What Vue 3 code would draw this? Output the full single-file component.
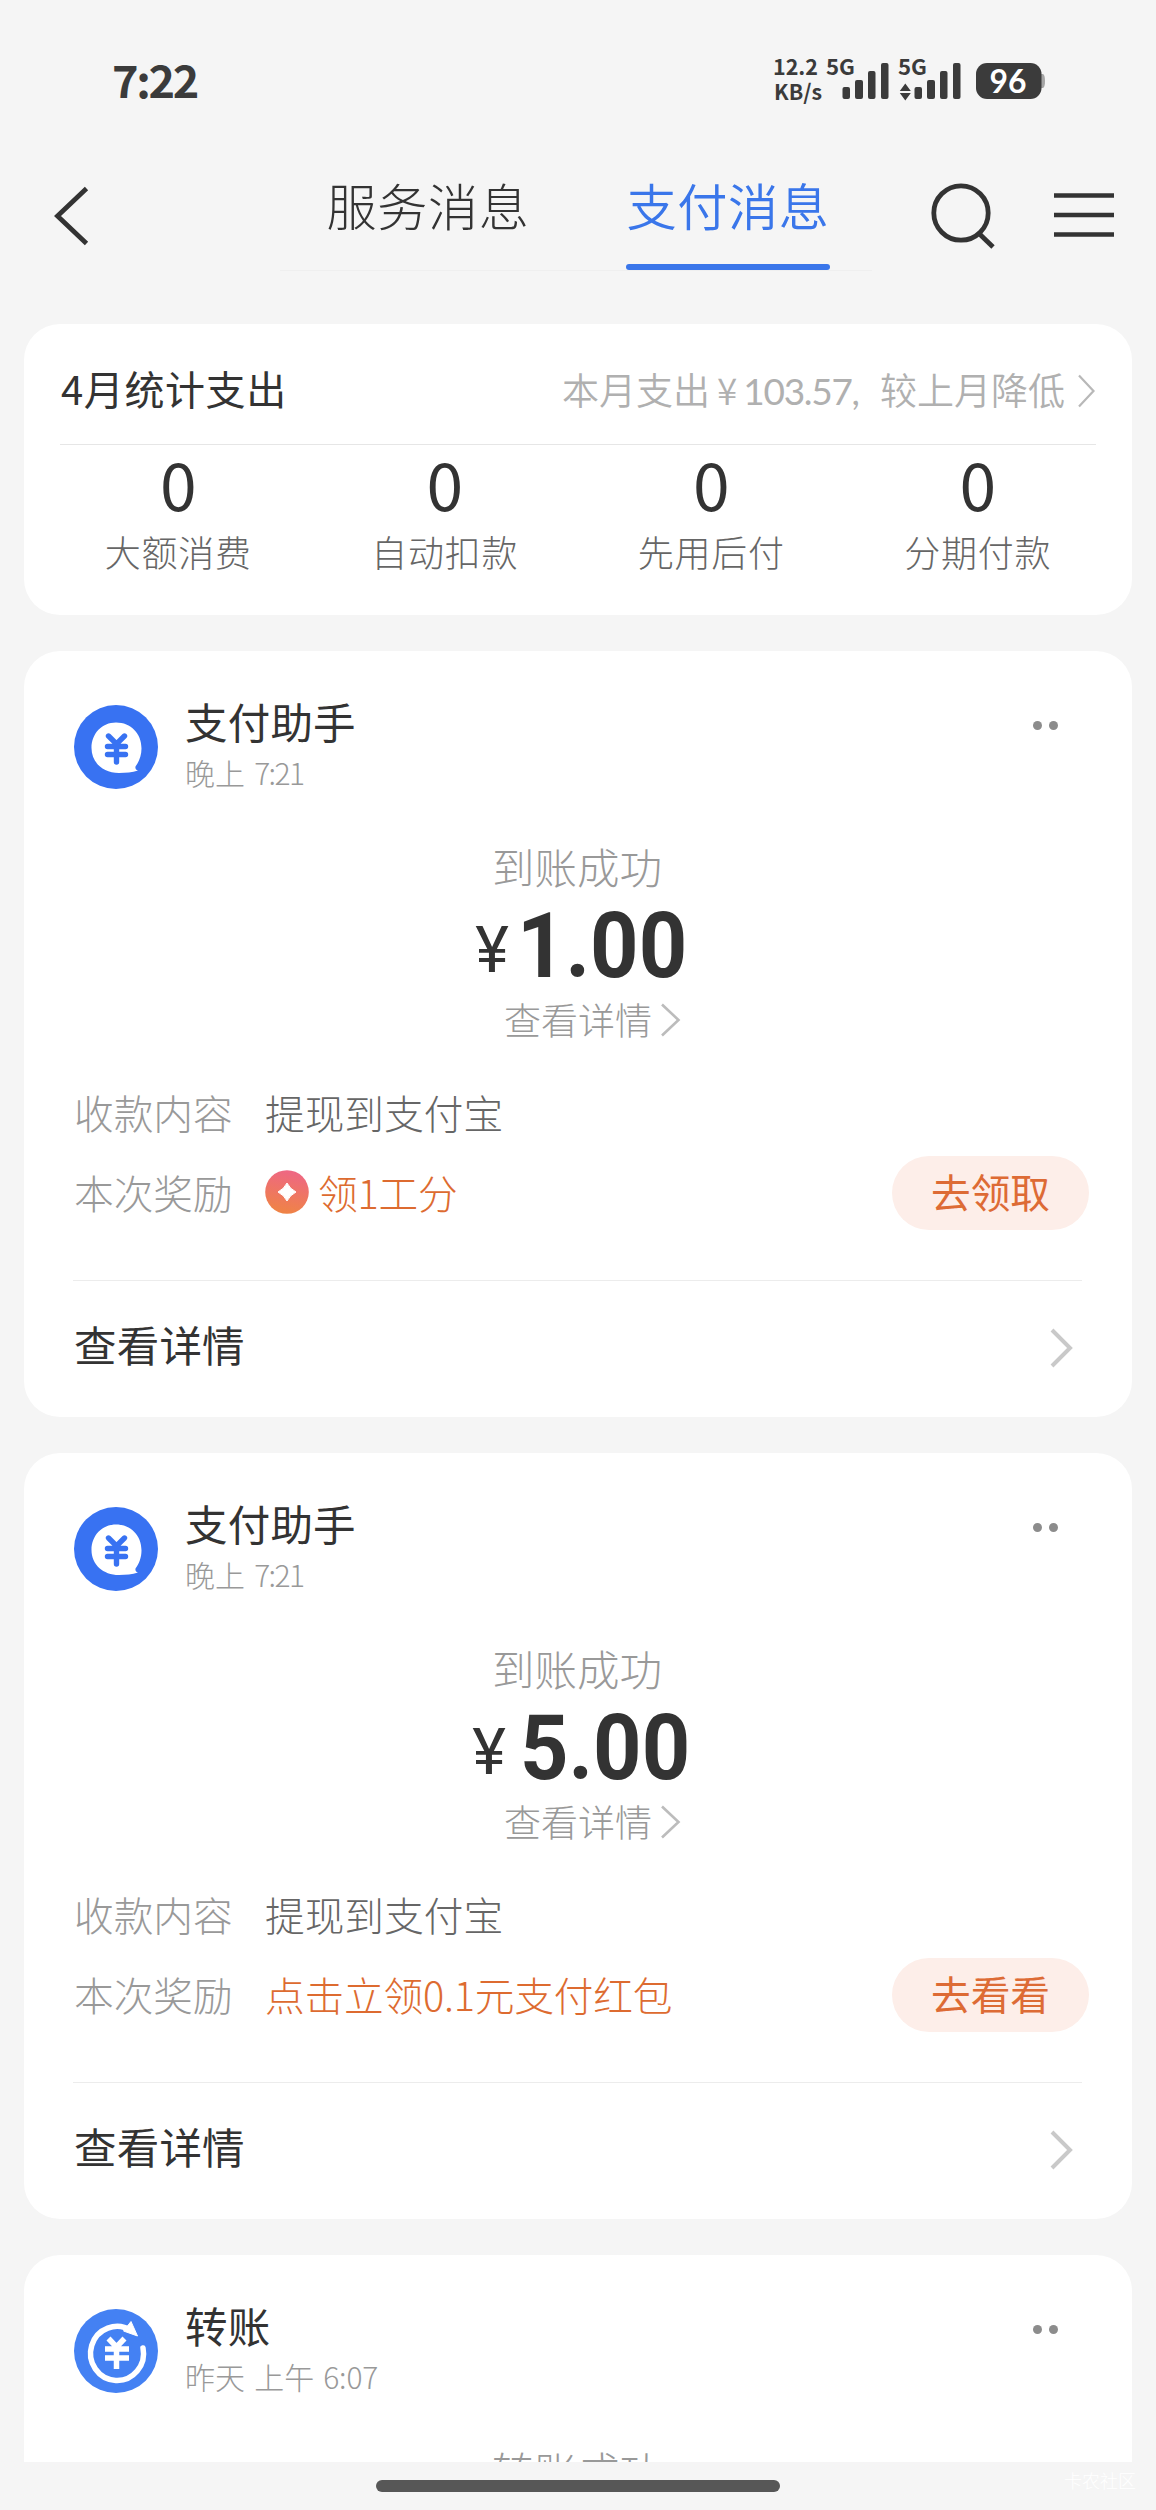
<script setup>
const stats = ['大额消费', '自动扣款', '先用后付', '分期付款']

const messages = [
  { amount: '1.00', narrow: true, reward: '领1工分', coin: true, action: '去领取' },
  { amount: '5.00', narrow: false, reward: '点击立领0.1元支付红包', coin: false, action: '去看看' },
]
</script>

<template>
  <div class="screen">
    <header class="status">
      <span class="clock">7:22</span>
      <svg class="indicators" width="290" height="65" viewBox="760 45 290 65">
        <g class="tiny">
          <text x="773" y="75" textLength="45" lengthAdjust="spacingAndGlyphs">12.2</text>
          <text x="774" y="100" textLength="48" lengthAdjust="spacingAndGlyphs">KB/s</text>
          <text x="826" y="75" textLength="29" lengthAdjust="spacingAndGlyphs">5G</text>
          <text x="898" y="75" textLength="29" lengthAdjust="spacingAndGlyphs">5G</text>
        </g>
        <g fill="#3b3b3b">
          <rect x="842.5" y="87" width="7.5" height="12" rx="2" />
          <rect x="855" y="80" width="8" height="19" rx="2" />
          <rect x="868" y="71" width="7.5" height="28" rx="2" />
          <rect x="881" y="63" width="7.5" height="36" rx="2" />
          <rect x="914.5" y="87" width="7.5" height="12" rx="2" />
          <rect x="927" y="80" width="8" height="19" rx="2" />
          <rect x="940" y="71" width="7.5" height="28" rx="2" />
          <rect x="953" y="63" width="7.5" height="36" rx="2" />
          <path d="M905.300 83.500l5.500 7.500h-11zM905.300 100.500l5.500-7.500h-11z" />
          <path d="M1040 74h3q2 1 2 7t-2 7h-3z" fill="#a5a5a5" />
          <rect x="976" y="63" width="65.500" height="36" rx="11" />
        </g>
        <text class="level" x="989.5" y="92.500" textLength="37" lengthAdjust="spacingAndGlyphs">96</text>
      </svg>
    </header>

    <nav class="nav">
      <svg class="back" width="40" height="60" viewBox="0 0 40 60"><path d="M36.500 2.500L7.500 30l29 27.500" fill="none" stroke="#333" stroke-width="4.800" /></svg>
      <div class="tabs">
        <span class="tab">服务消息</span>
        <span class="tab active">支付消息</span>
      </div>
      <svg class="search" width="68" height="70" viewBox="0 0 68 70"><ellipse cx="33" cy="34" rx="27.200" ry="27.200" fill="none" stroke="#333" stroke-width="4.800" /><path d="M50.500 54l14.500 14" stroke="#333" stroke-width="4.800" /></svg>
      <svg class="menu" width="60" height="46" viewBox="0 0 60 46"><path d="M0 2.500h60M0 22h60M0 41.500h60" stroke="#333" stroke-width="4.600" /></svg>
    </nav>

    <main class="feed">
      <section class="card summary">
        <div class="summary-head">
          <span class="summary-title">4月统计支出</span>
          <span class="summary-note"><span>本月支出</span><span class="money">¥<span>103.57,</span></span><span>较上月降低</span></span>
          <svg width="18" height="34" viewBox="0 0 18 34"><path d="M1 1.500L15.500 17 1 32.500" fill="none" stroke="#b8b8b8" stroke-width="2.200" /></svg>
        </div>
        <div class="stats">
          <div v-for="s in stats" :key="s" class="stat"><b>0</b><span>{{ s }}</span></div>
        </div>
      </section>

      <section v-for="m in messages" :key="m.amount" class="card">
        <div class="head">
          <svg class="avatar" width="84" height="84" viewBox="0 0 84 84">
            <circle cx="42" cy="42" r="42" fill="#3872f2" />
            <path d="M42 17.500C28 17.500 17.500 28.500 17.500 43S29 68 45 68c7 0 13-.7 19-2.500-2-.6-3-2-2.500-4C65 57 67.500 50.500 67.500 43.500 67.500 28.500 57 17.500 42 17.500z" fill="#fff" />
            <path d="M34.500 31l8 8 8-8M33.500 41.500h18M33.500 49.500h18M42.500 40v17" fill="none" stroke="#3872f2" stroke-width="5.400" stroke-linecap="round" />
          </svg>
          <div class="who"><span class="name">支付助手</span><span class="time">晚上 <span class="hour tight">7:21</span></span></div>
          <span class="more"><i></i><i></i></span>
        </div>
        <div class="result">到账成功</div>
        <div class="amount"><span class="yen" :class="{ close: m.narrow }">¥</span><span class="digits">{{ m.amount }}</span></div>
        <div class="detail">
          <span>查看详情</span>
          <svg width="20" height="34" viewBox="0 0 20 34"><path d="M1 1.500L17.500 17 1 32.500" fill="none" stroke="#bcbcbc" stroke-width="2.600" /></svg>
        </div>
        <div class="row"><span class="label">收款内容</span><span class="value">提现到支付宝</span></div>
        <div class="row">
          <span class="label">本次奖励</span>
          <svg v-if="m.coin" class="coin" width="44" height="44" viewBox="0 0 44 44">
            <defs><linearGradient id="coin" x1=".6" y1="0" x2=".4" y2="1"><stop offset="0" stop-color="#ee6685" /><stop offset="1" stop-color="#ef8444" /></linearGradient></defs>
            <circle cx="22" cy="22" r="21.800" fill="url(#coin)" />
            <path d="M22 13q3 6 9 9-6 3-9 9-3-6-9-9 6-3 9-9z" fill="#fff" stroke="#fff" stroke-linejoin="round" />
          </svg>
          <span class="reward">{{ m.reward }}</span>
          <span class="action">{{ m.action }}</span>
        </div>
        <div class="foot">
          <span>查看详情</span>
          <svg width="24" height="40" viewBox="0 0 24 40"><path d="M2 2L20 20 2 38" fill="none" stroke="#c9c9c9" stroke-width="4" /></svg>
        </div>
      </section>

      <section class="card last">
        <div class="head">
          <svg class="avatar" width="84" height="84" viewBox="0 0 84 84">
            <circle cx="42" cy="42" r="42" fill="#4481f3" />
            <path d="M57 21.500A26.500 27 0 1 0 69 39" fill="none" stroke="#fff" stroke-width="5.500" stroke-linecap="round" />
            <path d="M57 12.500l6.500 14.500-14-5z" fill="#fff" stroke="#fff" stroke-linejoin="round" />
            <path d="M34.500 29.500l8 8.500 8-8.500M31 40h24M31 49h24M42.500 38v22" fill="none" stroke="#fff" stroke-width="5.500" />
          </svg>
          <div class="who"><span class="name">转账</span><span class="time">昨天 上午 <span class="hour">6:07</span></span></div>
          <span class="more"><i></i><i></i></span>
        </div>
        <div class="result">转账成功</div>
      </section>
    </main>

    <footer class="bottom">
      <span class="handle"></span>
      <span class="mark">卡农社区</span>
    </footer>
  </div>
</template>

<style>
body {
  margin: 0;
  background: #f5f5f5;
}
</style>

<style scoped>
.screen {
  width: 1156px;
  height: 2510px;
  overflow: hidden;
  display: flex;
  flex-direction: column;
  background: #f5f5f5;
  color: #333;
  font-family: "Noto Sans CJK SC", sans-serif;
  font-weight: 300;
  white-space: nowrap;
}
svg {
  display: block;
  flex: none;
}
.status {
  height: 140px;
  box-sizing: border-box;
  padding: 45px 106px 0 112px;
  display: flex;
  justify-content: space-between;
}
.clock {
  font-size: 45px;
  line-height: 50px;
  margin-top: 9px;
  font-weight: 700;
  letter-spacing: -2.300px;
  color: #3b3b3b;
}
.tiny {
  font-size: 21.500px;
  font-weight: 700;
  fill: #3b3b3b;
}
.level {
  font: 700 32px Lato, sans-serif;
  fill: #fff;
}
.nav {
  height: 184px;
  flex: none;
  display: flex;
  align-items: flex-start;
}
.back {
  margin: 46px 0 0 50px;
}
.tabs {
  width: 592px;
  height: 131px;
  margin-left: 190px;
  box-sizing: border-box;
  border-bottom: 1px solid #efefef;
  display: flex;
  gap: 96px;
  padding-left: 46px;
}
.tab {
  height: 130px;
  width: 204px;
  box-sizing: border-box;
  padding-top: 29px;
  text-align: center;
  font-size: 50.200px;
  line-height: 70px;
  letter-spacing: .5px;
}
.active {
  color: #3a76ea;
  font-weight: 350;
  position: relative;
}
.active::after {
  content: "";
  position: absolute;
  left: 0;
  bottom: 0;
  width: 204px;
  height: 6px;
  border-radius: 3px;
  background: #3a76ea;
}
.search {
  margin: 39px 0 0 56px;
}
.menu {
  margin: 53px 0 0 58px;
}
.feed {
  height: 2138px;
  flex: none;
  overflow: hidden;
  padding: 0 24px;
  display: flex;
  flex-direction: column;
  gap: 36px;
}
.card {
  height: 766px;
  flex: none;
  box-sizing: border-box;
  padding: 0 50px;
  border-radius: 36px;
  background: #fff;
}
.summary {
  height: 291px;
  padding: 0 36px;
}
.summary-head {
  height: 121px;
  box-sizing: border-box;
  border-bottom: 1px solid #e6e6e6;
  display: flex;
  align-items: center;
  padding-top: 9px;
}
.summary-title {
  flex: 1;
  padding-left: 1px;
  margin-top: -2px;
  font-size: 40px;
  letter-spacing: .6px;
  font-weight: 400;
}
.summary-note {
  display: flex;
  align-items: baseline;
  font-size: 37px;
  font-weight: 350;
  color: #b0b0b0;
  margin-right: 13px;
}
.money {
  width: 170px;
  box-sizing: border-box;
  padding-left: 7px;
}
.money span {
  font-family: Lato, sans-serif;
  font-weight: 400;
  margin-left: 6px;
  letter-spacing: -1.300px;
}
.summary-head svg {
  margin-top: 5px;
}
.stats {
  display: flex;
  margin: 0 -15px;
}
.stat {
  flex: 1;
  display: flex;
  flex-direction: column;
  align-items: center;
}
.stat b {
  font-size: 66px;
  font-weight: 400;
  line-height: 74px;
}
.stat span {
  font-size: 36px;
  letter-spacing: .7px;
  line-height: 50px;
  margin-top: 7px;
  color: #666;
}
.head {
  display: flex;
  padding-top: 54px;
  height: 158px;
  box-sizing: border-box;
}
.who {
  flex: 1;
  margin-left: 27px;
  display: flex;
  flex-direction: column;
}
.name {
  font-size: 42.500px;
  font-weight: 400;
  line-height: 50px;
  margin-top: -9px;
  letter-spacing: .2px;
}
.time {
  font-size: 30px;
  line-height: 40px;
  margin-top: 6px;
  word-spacing: 2.500px;
  color: #999;
}
.hour {
  letter-spacing: -.2px;
}
.tight {
  letter-spacing: -1.600px;
}
.more {
  display: flex;
  gap: 7px;
  margin: 16px 24px 0 0;
}
.more i {
  width: 9px;
  height: 9px;
  border-radius: 50%;
  background: #8c8c8c;
}
.result {
  margin-top: 27px;
  padding-right: 2px;
  text-align: center;
  font-size: 42.500px;
  line-height: 60px;
  color: #999;
}
.amount {
  height: 99px;
  padding-left: 6px;
  display: flex;
  align-items: baseline;
  justify-content: center;
  font-family: Roboto, sans-serif;
  line-height: 100px;
}
.yen {
  font-size: 64px;
  font-weight: 450;
  margin-right: 14px;
  transform: translateY(-5px);
}
.close {
  margin-right: 8px;
}
.digits {
  font-size: 91px;
  font-weight: 700;
  transform: scaleX(.93);
  transform-origin: left;
  margin-right: -13px;
}
.detail {
  display: flex;
  align-items: center;
  justify-content: center;
  gap: 9px;
  height: 50px;
  padding-left: 29px;
  font-size: 37px;
  line-height: 48px;
  color: #999;
}
.detail span {
  margin-top: -2px;
}
.row {
  height: 80px;
  display: flex;
  align-items: center;
  font-size: 39.700px;
}
.detail + .row {
  margin-top: 28px;
}
.label {
  width: 191px;
  color: #999;
}
.label,
.value,
.reward {
  margin-top: -4px;
}
.value {
  color: #666;
}
.coin {
  margin: -2px 9px 0 0;
}
.reward {
  flex: 1;
  letter-spacing: -.2px;
  color: #dd6b30;
}
.action {
  width: 197px;
  height: 74px;
  margin-right: -7px;
  border-radius: 37px;
  background: #fdeee9;
  color: #dd6b35;
  font-weight: 400;
  text-align: center;
  line-height: 69px;
}
.foot {
  margin: 47px 0 0 -1px;
  height: 130px;
  border-top: 1px solid #ececec;
  display: flex;
  align-items: center;
  justify-content: space-between;
  padding-right: 8px;
  font-size: 42.500px;
  font-weight: 400;
}
.foot span {
  padding-left: 1px;
  margin-top: -5px;
  letter-spacing: .2px;
}
.foot svg {
  margin-top: 4px;
}
.bottom {
  height: 48px;
  position: relative;
  display: flex;
  justify-content: center;
}
.handle {
  width: 404px;
  height: 12px;
  margin-top: 18px;
  border-radius: 6px;
  background: #575757;
}
.mark {
  position: absolute;
  right: 20px;
  top: 4px;
  font-size: 18px;
  line-height: 28px;
  color: #fff;
}
</style>
